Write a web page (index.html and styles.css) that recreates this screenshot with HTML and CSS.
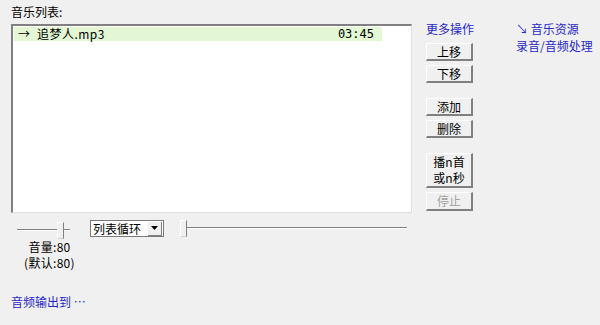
FILE: index.html
```html
<!DOCTYPE html>
<html lang="zh-CN">
<head>
    <meta charset="UTF-8">
    <title>音乐列表</title>
    <link rel="stylesheet" href="styles.css">
</head>
<body>
    <div class="main">
        <div class="left">
            <div class="caption">音乐列表:</div>
            <div class="listbox">
                <div class="row sel">
                    <span class="name">→&nbsp; 追梦人.mp3</span>
                    <span class="time">03:45</span>
                </div>
            </div>
            <div class="controls">
                <div class="volume">
                    <div class="slider small">
                        <div class="track"></div>
                        <div class="thumb" style="left: 40px"></div>
                    </div>
                    <div class="vol-text">音量:80</div>
                    <div class="vol-text">(默认:80)</div>
                </div>
                <div class="combo">
                    <span>列表循环</span>
                    <span class="drop"><svg width="7" height="4" viewBox="0 0 7 4"><path d="M0 0h7L3.5 4z" fill="#000"/></svg></span>
                </div>
                <div class="slider big">
                    <div class="track"></div>
                    <div class="thumb" style="left: 0"></div>
                </div>
            </div>
            <div class="output">音频输出到 ⋯</div>
        </div>
        <div class="ops">
            <div class="link">更多操作</div>
            <button class="btn">上移</button>
            <button class="btn">下移</button>
            <button class="btn gap">添加</button>
            <button class="btn">删除</button>
            <button class="btn gap tall"><span class="ln">播n首</span><span class="ln">或n秒</span></button>
            <button class="btn off">停止</button>
        </div>
        <div class="links">
            <div class="link">↘ 音乐资源</div>
            <div class="link">录音/音频处理</div>
        </div>
    </div>
</body>
</html>
```

FILE: styles.css
```css
body {
    margin: 0;
    background: #f0f0f0;
    font-family: "Noto Sans CJK SC", "DejaVu Sans", sans-serif;
    font-size: 12px;
    color: #000;
}
.main {
    display: flex;
    padding: 4px 0 0 11px;
}
.left {
    width: 401px;
}
.caption {
    height: 20px;
    line-height: 16px;
}
.listbox {
    height: 185px;
    background: #fff;
    border-top: 2px solid #808080;
    border-left: 2px solid #808080;
    border-right: 1px solid #e0e0e0;
    border-bottom: 1px solid #e0e0e0;
    padding: 1px 29px 0 1px;
}
.row {
    display: flex;
    justify-content: space-between;
    height: 14px;
    line-height: 14px;
    padding: 0 8px 0 4px;
    font-family: "DejaVu Sans Mono", "Noto Sans CJK SC", monospace;
    font-size: 12px;
}
.row .name {
    font-family: "Noto Sans CJK SC", monospace;
    letter-spacing: 0.5px;
}
.sel {
    background: #e3f7d4;
}
.controls {
    display: flex;
    align-items: flex-start;
    margin-top: 7px;
    height: 70px;
}
.volume {
    width: 79px;
}
.slider {
    position: relative;
    height: 17px;
}
.slider .track {
    position: absolute;
    left: 0;
    right: 0;
    top: 7px;
    border-top: 1px solid #808080;
    border-bottom: 1px solid #fff;
}
.slider .thumb {
    position: absolute;
    top: 0;
    width: 5px;
    height: 15px;
    border-left: 1px solid #fff;
    border-top: 1px solid #fff;
    border-right: 1px solid #808080;
    border-bottom: 1px solid #d0d0d0;
    background: #f0f0f0;
}
.small {
    width: 53px;
    margin: 2px 0 0 6px;
}
.vol-text {
    text-align: center;
    height: 16px;
    line-height: 16px;
    padding-right: 2px;
    letter-spacing: 0.3px;
}
.vol-text:first-of-type {
    margin-top: 1px;
}
.combo {
    display: flex;
    justify-content: space-between;
    align-items: center;
    width: 70px;
    height: 15px;
    background: #fff;
    border: 1px solid #7a7a7a;
    padding-left: 2px;
    line-height: 15px;
}
.drop {
    display: flex;
    align-items: center;
    justify-content: center;
    width: 13px;
    height: 13px;
    background: #f0f0f0;
    border-right: 1px solid #808080;
    border-bottom: 1px solid #808080;
    margin-right: 1px;
}
.big {
    width: 227px;
    margin: 0 0 0 16px;
}
.output {
    margin-top: 3px;
    color: #2727c8;
}
.ops {
    display: flex;
    flex-direction: column;
    width: 47px;
    margin: 16px 0 0 14px;
}
.link {
    color: #2727c8;
    line-height: 17px;
    white-space: nowrap;
}
.ops .link {
    margin-bottom: 6px;
}
.btn {
    display: block;
    width: 47px;
    height: 18px;
    margin: 0 0 4px 0;
    padding: 0;
    background: #f0f0f0;
    border-top: 1px solid #fff;
    border-left: 1px solid #fff;
    border-right: 2px solid #808080;
    border-bottom: 2px solid #808080;
    font-family: "Noto Sans CJK SC", sans-serif;
    font-size: 12px;
    line-height: 14px;
    color: #000;
}
.gap {
    margin-top: 11px;
}
.tall {
    height: 35px;
}
.ln {
    display: block;
    height: 16px;
    line-height: 16px;
}
.off {
    color: #a0a0a0;
    height: 19px;
}
.links {
    margin: 16px 0 0 43px;
}
```
